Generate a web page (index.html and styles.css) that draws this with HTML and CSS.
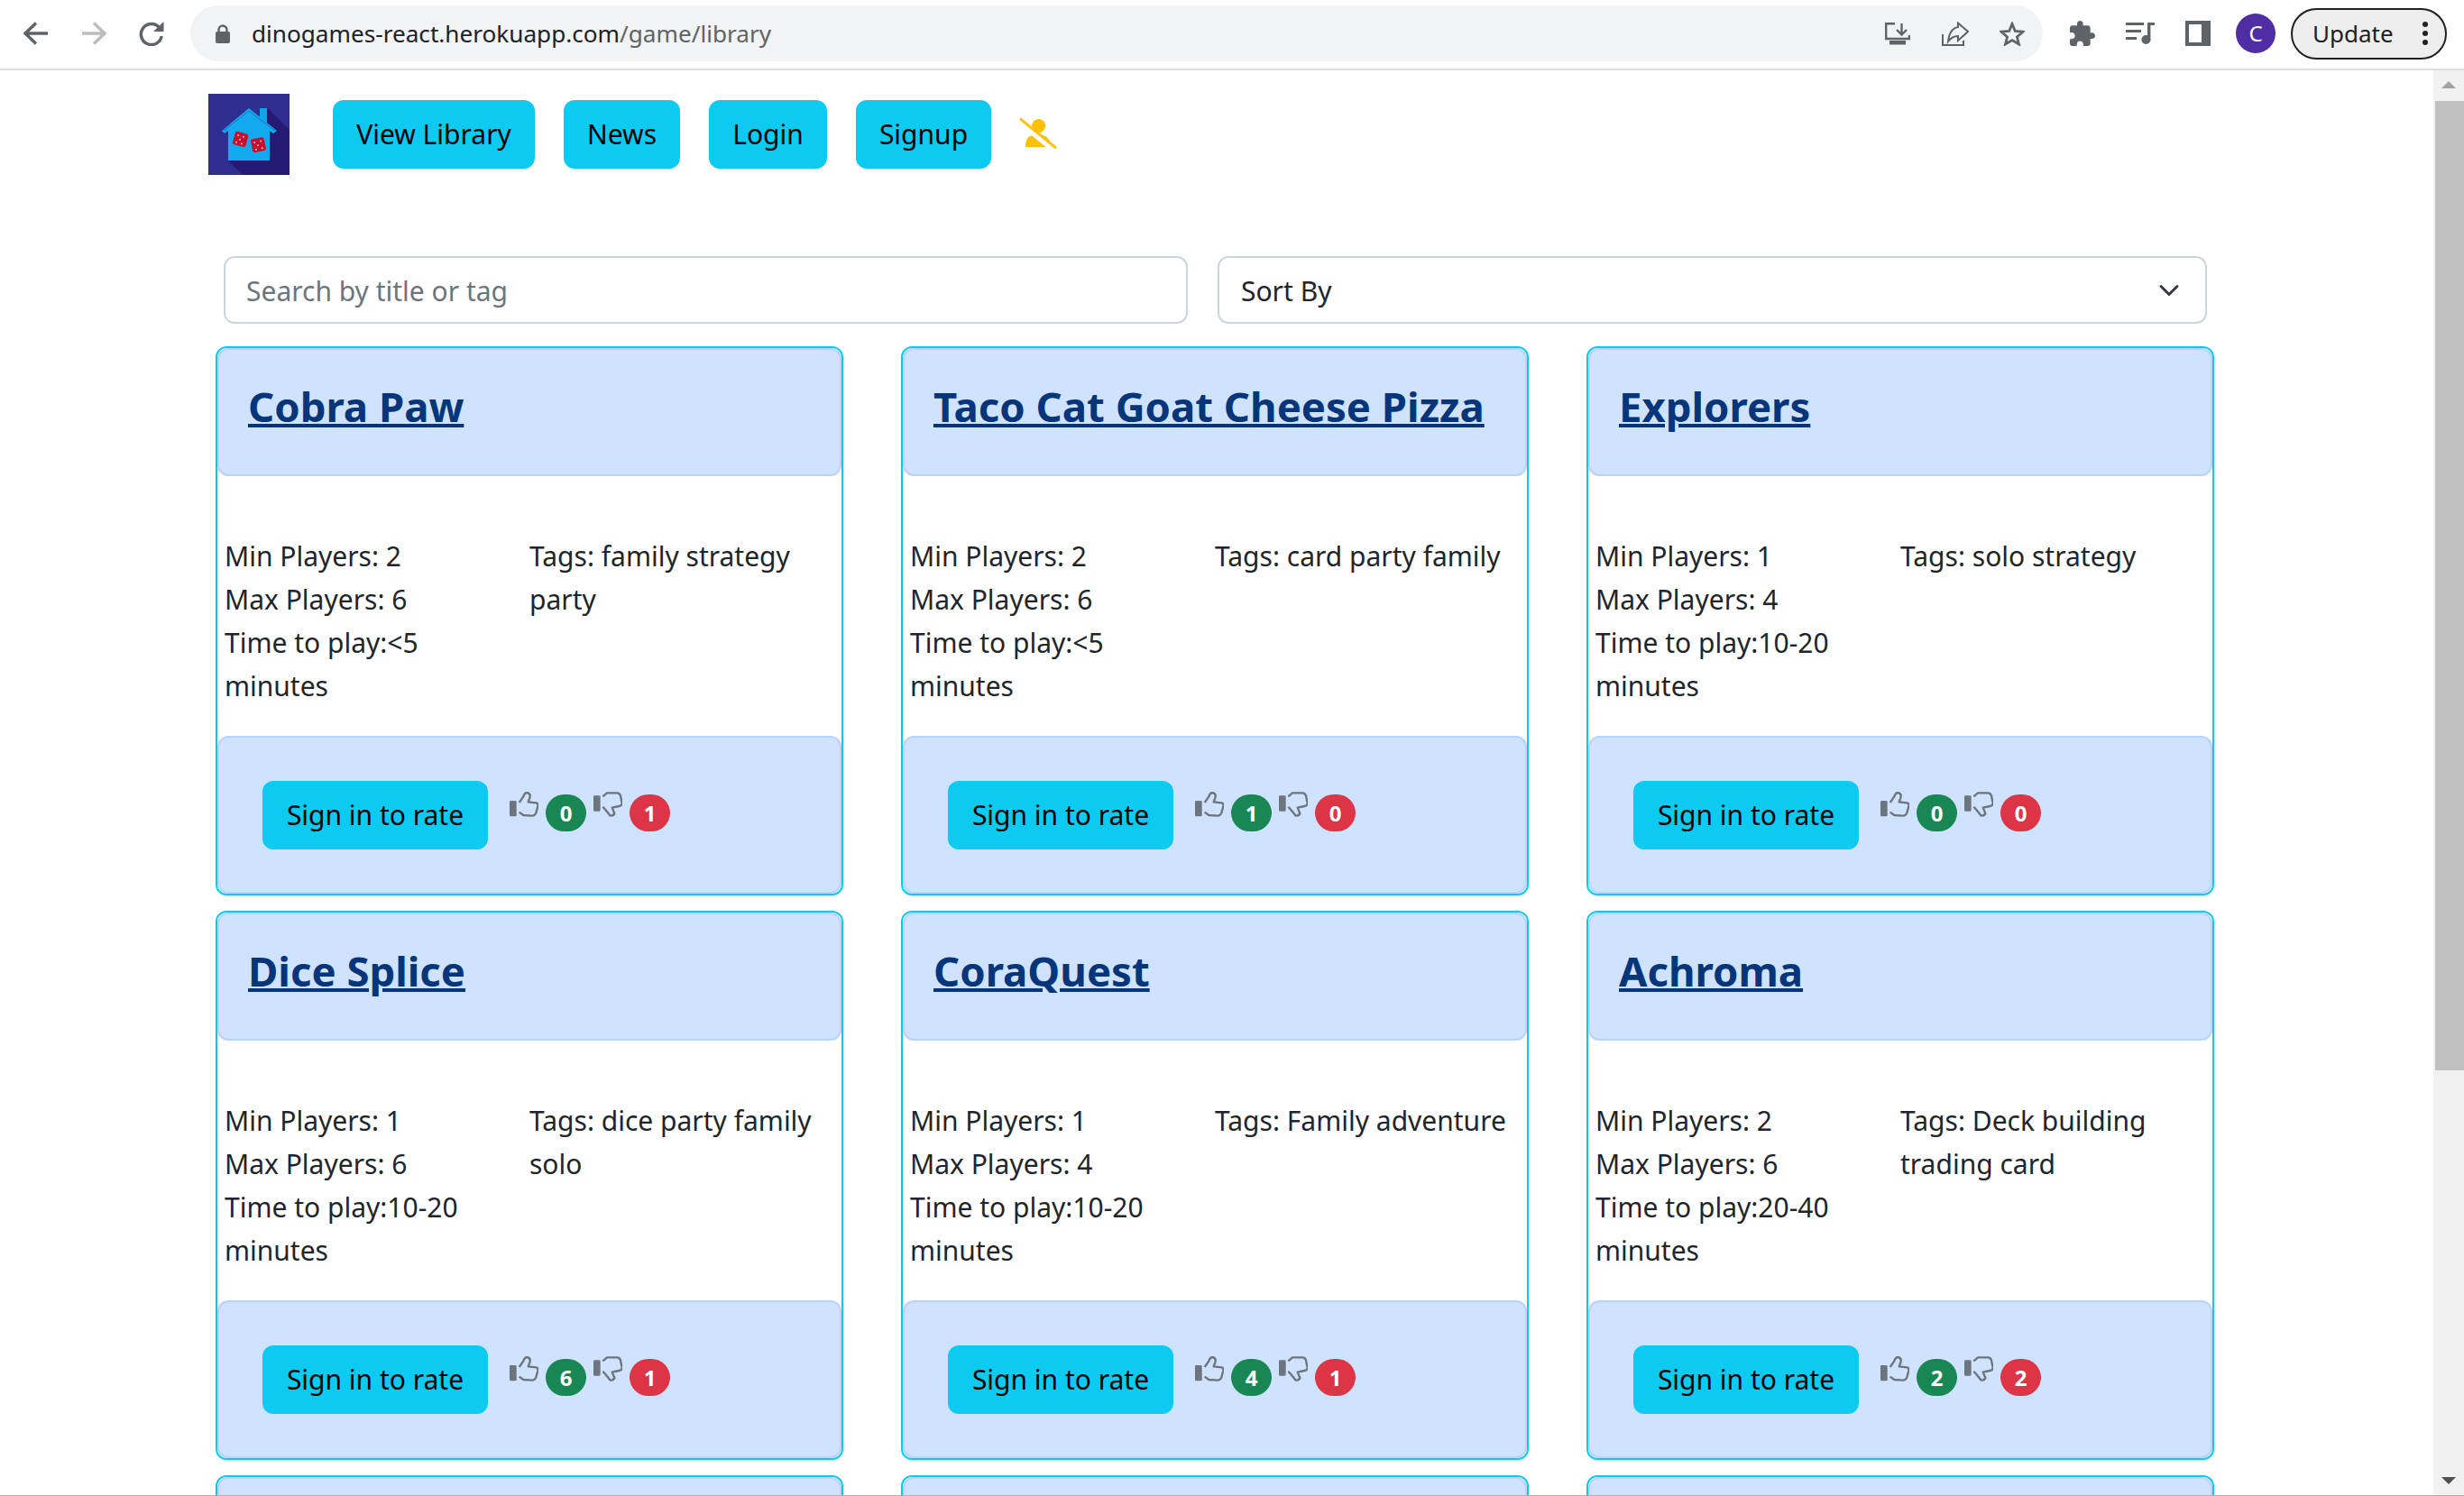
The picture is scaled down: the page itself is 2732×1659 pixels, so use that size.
FILE: index.html
```html
<!DOCTYPE html>
<html lang="en">
<head>
  <meta charset="UTF-8">
  <title>Game Library</title>
  <link rel="stylesheet" href="styles.css">
</head>
<body>
  <svg class="defs" width="0" height="0">
    <symbol id="thumb-up" viewBox="0 0 96 84">
      <rect x="0" y="30" width="23" height="52" rx="4" fill="#6c757d"/>
      <path d="M32 36 L46 16 Q50 3 58 3 Q70 5 68 18 L62 34 L88 37 Q96 39 94 48 L88 70 Q84 80 74 80 L46 78 L32 68" fill="none" stroke="#6c757d" stroke-width="7" stroke-linejoin="round"/>
    </symbol>
    <symbol id="thumb-down" viewBox="0 0 96 84">
      <rect x="0" y="13" width="23" height="52" rx="4" fill="#6c757d"/>
      <path d="M31 16 L45 4 L80 4 Q88 5 90 14 L95 38 Q95 47 85 48 L62 53 L70 72 Q66 82 55 79 L40 60 L31 50" fill="none" stroke="#6c757d" stroke-width="7" stroke-linejoin="round"/>
    </symbol>
  </svg>

  <header class="toolbar">
    <svg class="tool-nav" viewBox="0 0 28 28"><path d="M27 14 H2 M14 2.5 L2 14 L14 25.5" fill="none" stroke="#5f6368" stroke-width="3.4"/></svg>
    <svg class="tool-nav" viewBox="0 0 28 28"><path d="M1 14 H26 M14 2.5 L26 14 L14 25.5" fill="none" stroke="#babcbe" stroke-width="3.4"/></svg>
    <svg class="tool-nav" viewBox="0 0 28 28"><path d="M23 8 A11.5 11.5 0 1 0 25.2 17" fill="none" stroke="#5f6368" stroke-width="3.4"/><path d="M16 12 H27.5 V1 Z" fill="#5f6368"/></svg>
    <div class="omnibox">
      <svg class="lock" viewBox="0 0 16 21"><rect x="0" y="8" width="16" height="13" rx="2" fill="#5f6368"/><path d="M3.5 9 V6 A4.5 4.5 0 0 1 12.5 6 V9" fill="none" stroke="#5f6368" stroke-width="2.4"/></svg>
      <span class="url">dinogames-react.herokuapp.com<span class="url-path">/game/library</span></span>
      <div class="omni-icons">
        <svg class="icon-install" viewBox="0 0 28 25"><path d="M11 1.2 H1.2 V18 H27 V14 M18.5 1 V13 M13 8 L18.5 13.5 L24 8" fill="none" stroke="#5f6368" stroke-width="2.4"/><rect x="5" y="20" width="18" height="4.5" fill="#5f6368"/></svg>
        <svg class="icon-share" viewBox="0 0 30 27"><path d="M1 14 V26 H24 V21" fill="none" stroke="#5f6368" stroke-width="2"/><path d="M18 1.5 L29 11 L18 21 V16 C13 16 10 18 7 22 C8 13 12 7 18 6 Z" fill="none" stroke="#5f6368" stroke-width="2"/></svg>
        <svg class="icon-star" viewBox="0 0 28 27"><polygon points="14,2.5 17.3,10.5 26,11.2 19.4,17 21.5,25 14,20.6 6.5,25 8.6,17 2,11.2 10.7,10.5" fill="none" stroke="#5f6368" stroke-width="2.8"/></svg>
      </div>
    </div>
    <div class="tool-right">
      <svg class="icon-puzzle" viewBox="2 1 21 21"><path fill="#5f6368" d="M20.5 11H19V7c0-1.1-.9-2-2-2h-4V3.5C13 2.12 11.88 1 10.5 1S8 2.12 8 3.5V5H4c-1.1 0-1.99.9-1.99 2v3.8H3.5c1.49 0 2.7 1.21 2.7 2.7s-1.21 2.7-2.7 2.7H2V20c0 1.1.9 2 2 2h3.8v-1.5c0-1.49 1.21-2.7 2.7-2.7 1.49 0 2.7 1.21 2.7 2.7V22H17c1.1 0 2-.9 2-2v-4h1.5c1.38 0 2.5-1.12 2.5-2.5S21.88 11 20.5 11z"/></svg>
      <svg class="icon-media" viewBox="0 0 32 24"><g fill="#5f6368"><rect x="0" y="0" width="20" height="3"/><rect x="0" y="8" width="17" height="3"/><rect x="0" y="16" width="12" height="3"/><rect x="24" y="0" width="3.4" height="20"/><rect x="24" y="0" width="8" height="3"/><circle cx="22.4" cy="19" r="5"/></g></svg>
      <svg class="icon-panel" viewBox="0 0 28 28"><path fill="#5f6368" fill-rule="evenodd" d="M0 0 H28 V28 H0 Z M4 4 V24 H18 V4 Z"/></svg>
      <div class="avatar">C</div>
      <div class="update">
        <span>Update</span>
        <div class="kebab"><i></i><i></i><i></i></div>
      </div>
    </div>
  </header>

  <div class="viewport">
    <main class="page">
      <nav class="topnav">
        <svg class="logo" viewBox="0 0 90 90">
          <rect width="90" height="90" fill="#2e2d90"/>
          <polygon points="66,16 90,40 90,90 38,90 22,74 68,74 68,44 60,30" fill="#241c74"/>
          <rect x="57" y="16" width="8" height="16" fill="#12a5e6"/>
          <polygon points="45,16 76,41 72,44 68,41 68,74 22,74 22,41 18,44 15,41" fill="#12a9ee"/>
          <path d="M17 41 L45 19 L74 41" fill="none" stroke="#1b6fc4" stroke-width="1"/>
          <g transform="rotate(15 36 51)"><rect x="28" y="43" width="15" height="15" rx="2.5" fill="#c8102e"/><g fill="#f4c9cf"><circle cx="32" cy="47" r="1"/><circle cx="38" cy="47" r="1"/><circle cx="35" cy="51" r="1"/><circle cx="32" cy="55" r="1"/><circle cx="38" cy="55" r="1"/></g></g>
          <g transform="rotate(-12 56 57)"><rect x="48" y="49" width="15" height="15" rx="2.5" fill="#c8102e"/><g fill="#f4c9cf"><circle cx="52" cy="53" r="1"/><circle cx="59" cy="53" r="1"/><circle cx="55" cy="57" r="1"/><circle cx="52" cy="61" r="1"/><circle cx="59" cy="61" r="1"/></g></g>
        </svg>
        <a class="btn btn-library">View Library</a>
        <a class="btn btn-news">News</a>
        <a class="btn btn-login">Login</a>
        <a class="btn btn-signup">Signup</a>
        <svg class="user-off" viewBox="0 0 42 37">
          <circle cx="21.7" cy="9.5" r="7.5" fill="#ffc107"/>
          <path d="M7 33 V30 Q8 20 16 20 H26 Q35 22 35 33 Z" fill="#ffc107"/>
          <path d="M0 5 L38 36" stroke="#fff" stroke-width="6"/>
          <path d="M2 2.3 L40 33.3" stroke="#ffc107" stroke-width="3" stroke-linecap="round"/>
        </svg>
      </nav>

      <div class="filters">
        <input class="search" type="text" placeholder="Search by title or tag">
        <select class="sort">
          <option>Sort By</option>
        </select>
      </div>

      <section class="games">
        <article class="card">
          <div class="card-head"><a class="title">Cobra Paw</a></div>
          <div class="info">
            <div>Min Players: 2<br>Max Players: 6<br>Time to play:&lt;5<br>minutes</div>
            <div>Tags: family strategy<br>party</div>
          </div>
          <div class="card-foot">
            <a class="btn">Sign in to rate</a>
            <svg class="thumb"><use href="#thumb-up"/></svg>
            <span class="badge green">0</span>
            <svg class="thumb"><use href="#thumb-down"/></svg>
            <span class="badge red">1</span>
          </div>
        </article>
        <article class="card">
          <div class="card-head"><a class="title">Taco Cat Goat Cheese Pizza</a></div>
          <div class="info">
            <div>Min Players: 2<br>Max Players: 6<br>Time to play:&lt;5<br>minutes</div>
            <div>Tags: card party family</div>
          </div>
          <div class="card-foot">
            <a class="btn">Sign in to rate</a>
            <svg class="thumb"><use href="#thumb-up"/></svg>
            <span class="badge green">1</span>
            <svg class="thumb"><use href="#thumb-down"/></svg>
            <span class="badge red">0</span>
          </div>
        </article>
        <article class="card">
          <div class="card-head"><a class="title">Explorers</a></div>
          <div class="info">
            <div>Min Players: 1<br>Max Players: 4<br>Time to play:10-20<br>minutes</div>
            <div>Tags: solo strategy</div>
          </div>
          <div class="card-foot">
            <a class="btn">Sign in to rate</a>
            <svg class="thumb"><use href="#thumb-up"/></svg>
            <span class="badge green">0</span>
            <svg class="thumb"><use href="#thumb-down"/></svg>
            <span class="badge red">0</span>
          </div>
        </article>
        <article class="card">
          <div class="card-head"><a class="title">Dice Splice</a></div>
          <div class="info">
            <div>Min Players: 1<br>Max Players: 6<br>Time to play:10-20<br>minutes</div>
            <div>Tags: dice party family<br>solo</div>
          </div>
          <div class="card-foot">
            <a class="btn">Sign in to rate</a>
            <svg class="thumb"><use href="#thumb-up"/></svg>
            <span class="badge green">6</span>
            <svg class="thumb"><use href="#thumb-down"/></svg>
            <span class="badge red">1</span>
          </div>
        </article>
        <article class="card">
          <div class="card-head"><a class="title">CoraQuest</a></div>
          <div class="info">
            <div>Min Players: 1<br>Max Players: 4<br>Time to play:10-20<br>minutes</div>
            <div>Tags: Family adventure</div>
          </div>
          <div class="card-foot">
            <a class="btn">Sign in to rate</a>
            <svg class="thumb"><use href="#thumb-up"/></svg>
            <span class="badge green">4</span>
            <svg class="thumb"><use href="#thumb-down"/></svg>
            <span class="badge red">1</span>
          </div>
        </article>
        <article class="card">
          <div class="card-head"><a class="title">Achroma</a></div>
          <div class="info">
            <div>Min Players: 2<br>Max Players: 6<br>Time to play:20-40<br>minutes</div>
            <div>Tags: Deck building<br>trading card</div>
          </div>
          <div class="card-foot">
            <a class="btn">Sign in to rate</a>
            <svg class="thumb"><use href="#thumb-up"/></svg>
            <span class="badge green">2</span>
            <svg class="thumb"><use href="#thumb-down"/></svg>
            <span class="badge red">2</span>
          </div>
        </article>
        <article class="card"><div class="card-head"></div></article>
        <article class="card"><div class="card-head"></div></article>
        <article class="card"><div class="card-head"></div></article>
      </section>
    </main>

    <div class="scrollbar">
      <div class="arrow-up"></div>
      <div class="thumb-bar"></div>
      <div class="arrow-down"></div>
    </div>
  </div>
</body>
</html>
```

FILE: styles.css
```css
* {
  box-sizing: border-box;
}
html, body {
  height: 100%;
}
body {
  margin: 0;
  display: flex;
  flex-direction: column;
  overflow: hidden;
  background: #fff;
  color: #212529;
  font-family: 'Noto Sans', 'Open Sans', sans-serif;
  font-size: 30px;
  line-height: 48px;
}
.defs {
  position: absolute;
}

/* browser bar */
.toolbar {
  flex: none;
  height: 78px;
  display: flex;
  align-items: center;
  padding: 0 18px 2px 26px;
  border-bottom: 2px solid #dedede;
}
.tool-nav {
  width: 28px;
  height: 28px;
  margin-right: 36px;
}
.omnibox {
  width: 2054px;
  height: 62px;
  margin-left: -7px;
  display: flex;
  align-items: center;
  padding: 0 20px 0 28px;
  border-radius: 31px;
  background: #f1f3f4;
}
.lock {
  width: 16px;
  height: 21px;
}
.url {
  margin-left: 24px;
  font-size: 26.15px;
  color: #202124;
}
.url-path {
  color: #5f6368;
}
.omni-icons {
  margin-left: auto;
  display: flex;
  align-items: center;
  gap: 34px;
}
.icon-install {
  width: 28px;
  height: 25px;
  margin-right: 1px;
}
.icon-share {
  width: 30px;
  height: 27px;
}
.icon-star {
  width: 28px;
  height: 27px;
}
.tool-right {
  margin-left: 30px;
  display: flex;
  align-items: center;
}
.icon-puzzle {
  width: 28px;
  height: 28px;
}
.icon-media {
  width: 32px;
  height: 24px;
  margin-left: 34px;
}
.icon-panel {
  width: 28px;
  height: 28px;
  margin-left: 34px;
}
.avatar {
  width: 44px;
  height: 44px;
  margin-left: 28px;
  border-radius: 50%;
  background: #4f2da2;
  color: #fff;
  font-size: 24px;
  line-height: 44px;
  text-align: center;
}
.update {
  width: 173px;
  height: 57px;
  margin-left: 17px;
  display: flex;
  align-items: center;
  justify-content: space-between;
  padding: 0 19px 0 22px;
  border: 2px solid #202124;
  border-radius: 29px;
  background: #eee;
  color: #202124;
  font-size: 26px;
}
.kebab i {
  display: block;
  width: 6px;
  height: 6px;
  margin: 4px 0;
  border-radius: 50%;
  background: #202124;
}

/* page */
.viewport {
  flex: 1;
  min-height: 0;
  display: flex;
  border-bottom: 1px solid #b5b0ac;
}
.page {
  flex: 1;
  min-width: 0;
  overflow: hidden;
}
.topnav {
  display: flex;
  align-items: center;
  padding: 26px 0 0 231px;
}
.logo {
  width: 90px;
  height: 90px;
  margin-right: 48px;
}
.btn {
  display: inline-block;
  height: 76px;
  padding: 0 24px;
  border-radius: 12px;
  background: #0dcaf0;
  color: #000;
  line-height: 76px;
  text-align: center;
  white-space: nowrap;
}
.topnav .btn {
  margin-right: 32px;
  padding: 0;
}
.btn-library {
  width: 224px;
}
.btn-news {
  width: 129px;
}
.btn-login {
  width: 131px;
}
.btn-signup {
  width: 150px;
}
.user-off {
  width: 42px;
  height: 37px;
  margin: -2px 0 0 -1px;
}
.filters {
  display: flex;
  gap: 33px;
  margin-top: 90px;
  padding-left: 248px;
}
.search, .sort {
  height: 75px;
  padding: 2px 24px 0;
  border: 2px solid #ced4da;
  border-radius: 12px;
  background-color: #fff;
  color: #212529;
  font: inherit;
}
.search {
  width: 1069px;
  padding-left: 23px;
}
.search::placeholder {
  color: #6c757d;
}
.sort {
  width: 1097px;
  appearance: none;
  background-image: url("data:image/svg+xml,%3csvg xmlns='http://www.w3.org/2000/svg' viewBox='0 0 16 16'%3e%3cpath fill='none' stroke='%23343a40' stroke-linecap='round' stroke-linejoin='round' stroke-width='2' d='M2 5l6 6 6-6'/%3e%3c/svg%3e");
  background-repeat: no-repeat;
  background-position: right 24px center;
  background-size: 32px 24px;
}
.games {
  display: grid;
  grid-template-columns: repeat(3, 696px);
  column-gap: 64px;
  row-gap: 17px;
  margin-top: 25px;
  padding-left: 239px;
}
.card {
  height: 609px;
  border: 2px solid #0dcaf0;
  border-radius: 12px;
}
.card-head {
  height: 142px;
  padding: 33px 32px 0;
  border: 2px solid #b6d4fe;
  border-radius: 12px;
  background: #cfe2ff;
}
.title {
  color: #06357a;
  font-size: 45.5px;
  font-weight: 700;
  line-height: 58px;
  text-decoration: underline;
  text-decoration-thickness: 4px;
}
.info {
  display: grid;
  grid-template-columns: 338px 346px;
  height: 192px;
  margin-top: 65px;
  padding-left: 8px;
}
.card-foot {
  height: 175px;
  margin-top: 31px;
  display: flex;
  align-items: center;
  padding-left: 48px;
  border: 2px solid #b6d4fe;
  border-radius: 12px;
  background: #cfe2ff;
}
.card-foot .btn {
  width: 250px;
  padding: 0;
  margin-right: 24px;
}
.thumb {
  width: 32px;
  height: 28px;
  margin: -23px 8px 0 0;
}
.badge {
  width: 45px;
  height: 41px;
  margin: -4px 8px 0 0;
  border-radius: 21px;
  color: #fff;
  font-size: 24px;
  font-weight: 700;
  line-height: 41px;
  text-align: center;
}
.green {
  background: #198754;
}
.red {
  background: #dc3545;
}

/* scrollbar */
.scrollbar {
  flex: none;
  width: 34px;
  display: flex;
  flex-direction: column;
  align-items: center;
  background: #f1f1f1;
}
.arrow-up {
  margin-top: 12px;
  border: 8px solid transparent;
  border-top: 0;
  border-bottom: 8px solid #a3a3a3;
}
.thumb-bar {
  width: 32px;
  height: 1075px;
  margin-top: 14px;
  margin-left: 2px;
  background: #c1c1c1;
}
.arrow-down {
  margin-top: auto;
  margin-bottom: 12px;
  border: 8px solid transparent;
  border-bottom: 0;
  border-top: 8px solid #505050;
}
```
